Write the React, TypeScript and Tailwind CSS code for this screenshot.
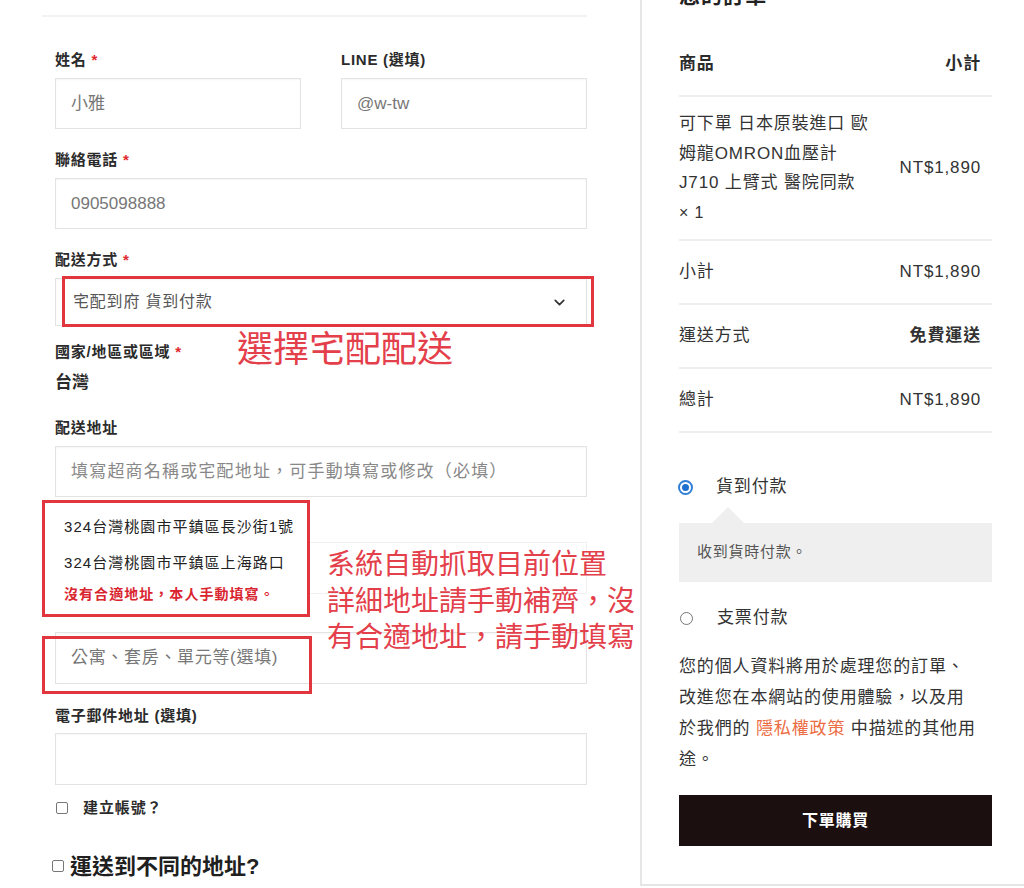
import { ChevronDown } from "lucide-react";
import type { ReactNode } from "react";

function Label({ children, required }: { children: ReactNode; required?: boolean }) {
  return (
    <div className="h-[20px] text-[15px] leading-[20px] font-bold tracking-[0.05em] text-[#2b2b2b]">
      {children}
      {required && <span className="ml-[5px] text-[#e0282e]">*</span>}
    </div>
  );
}

function Box({ children, className = "" }: { children?: ReactNode; className?: string }) {
  return (
    <div
      className={`flex items-center px-[15px] border border-[#e3e3e3] shadow-[inset_0_1px_2px_rgba(0,0,0,0.04)] text-[17px] text-[#777] bg-white ${className}`}
    >
      {children}
    </div>
  );
}

function Row({ left, right, className = "" }: { left: ReactNode; right: ReactNode; className?: string }) {
  return (
    <div className={`flex items-center justify-between pr-[11px] border-b-2 border-[#efefef] ${className}`}>
      <div>{left}</div>
      <div>{right}</div>
    </div>
  );
}

export default function App() {
  return (
    <div className="relative h-[888px] w-[1024px] overflow-hidden bg-white font-['Liberation_Sans','Noto_Sans_CJK_TC',sans-serif] text-[#333]">
      <div className="flex h-full">
        {/* checkout form */}
        <div className="w-[640px] shrink-0 pl-[55px] pr-[53px] pt-[15px]">
          <div className="-ml-[13px] border-t-2 border-[#f2f2f2]" />

          <div className="mt-[33px] grid grid-cols-2 gap-x-[40px]">
            <div>
              <Label required>姓名</Label>
              <Box className="mt-[8px] h-[51px]">小雅</Box>
            </div>
            <div>
              <Label>LINE (選填)</Label>
              <Box className="mt-[8px] h-[51px]">@w-tw</Box>
            </div>
          </div>

          <div className="mt-[21px]">
            <Label required>聯絡電話</Label>
            <Box className="mt-[8px] h-[51px]">0905098888</Box>
          </div>

          <div className="mt-[21px]">
            <Label required>配送方式</Label>
            <Box className="mt-[8px] h-[48px] justify-between !text-[16px] !text-[#555] tracking-[0.05em]">
              <span className="pl-[2px]">宅配到府 貨到付款</span>
              <ChevronDown size={17} strokeWidth={2.4} className="mr-[3px] text-[#333]" />
            </Box>
          </div>

          <div className="mt-[16px]">
            <Label required>國家/地區或區域</Label>
            <div className="mt-[11px] h-[20px] text-[17px] leading-[20px] font-bold text-[#2b2b2b]">台灣</div>
          </div>

          <div className="mt-[25px]">
            <Label>配送地址</Label>
            <Box className="mt-[8px] h-[51px] border-[#dba3ab] tracking-[0.07em] !text-[#888]">
              填寫超商名稱或宅配地址，可手動填寫或修改（必填）
            </Box>
          </div>

          <Box className="mt-[45px] h-[52px] border-[#f0f0f0] shadow-none" />

          <Box className="mt-[38px] h-[52px] tracking-[0.04em]">公寓、套房、單元等(選填)</Box>

          <div className="mt-[22px]">
            <Label>電子郵件地址 (選填)</Label>
            <Box className="mt-[7px] h-[52px]" />
          </div>

          <label className="mt-[13px] flex h-[20px] items-center">
            <span className="ml-[1px] h-[12px] w-[12px] rounded-[2px] border border-[#777]" />
            <span className="ml-[15px] text-[15px] font-bold tracking-[0.06em] text-[#2b2b2b]">建立帳號？</span>
          </label>

          <div className="mt-[33px] flex h-[30px] items-center">
            <span className="-ml-[3px] h-[12px] w-[12px] rounded-[2px] border border-[#777]" />
            <span className="ml-[6px] text-[22px] font-bold text-[#1f1f1f]">運送到不同的地址?</span>
          </div>
        </div>

        {/* order summary */}
        <aside className="h-[886px] flex-1 border-l-2 border-b-2 border-[#e6e6e6] pl-[37px] pr-[32px]">
          <div className="-mt-[18px] h-[28px] text-[21px] font-bold leading-[28px] tracking-[0.05em] text-[#222]">您的訂單</div>

          <div className="text-[17px] tracking-[0.05em]">
            <Row className="mt-[23px] h-[64px] font-bold text-[#2b2b2b]" left="商品" right="小計" />
            <Row
              className="h-[144px]"
              left={
                <div className="leading-[29.5px]">
                  可下單 日本原裝進口 歐<br />
                  姆龍OMRON血壓計<br />
                  J710 上臂式 醫院同款<br />
                  <span className="text-[16px]">× 1</span>
                </div>
              }
              right="NT$1,890"
            />
            <Row className="h-[64px]" left="小計" right="NT$1,890" />
            <Row className="h-[64px]" left="運送方式" right={<span className="font-bold">免費運送</span>} />
            <Row className="h-[64px]" left="總計" right="NT$1,890" />
          </div>

          <div className="mt-[42px] flex h-[24px] items-center">
            <span className="ml-[-1px] flex h-[15px] w-[15px] items-center justify-center rounded-full border-2 border-[#2f7fd8] bg-white">
              <span className="h-[7px] w-[7px] rounded-full bg-[#1f6fcf]" />
            </span>
            <span className="ml-[23px] text-[17px] tracking-[0.05em]">貨到付款</span>
          </div>

          <div className="relative mt-[24px] flex h-[59px] items-center bg-[#efefef] pl-[18px] text-[15px] tracking-[0.05em] text-[#555]">
            <span className="absolute -top-[16px] left-[33px] h-0 w-0 border-x-[16px] border-b-[16px] border-x-transparent border-b-[#efefef]" />
            收到貨時付款。
          </div>

          <div className="mt-[24px] flex h-[24px] items-center">
            <span className="ml-[1px] h-[13px] w-[13px] rounded-full border border-[#777]" />
            <span className="ml-[24px] text-[17px] tracking-[0.05em]">支票付款</span>
          </div>

          <p className="mt-[21px] text-[17px] leading-[31px] tracking-[0.05em] text-[#333]">
            您的個人資料將用於處理您的訂單、<br />
            改進您在本網站的使用體驗，以及用<br />
            於我們的 <span className="text-[#ec6c43]">隱私權政策</span> 中描述的其他用<br />
            途。
          </p>

          <button className="mt-[20px] flex h-[51px] w-full items-center justify-center bg-[#1b0f10] text-[16px] font-bold tracking-[0.05em] text-white">
            下單購買
          </button>
        </aside>
      </div>

      {/* annotations drawn over the form */}
      <div className="absolute left-[62px] top-[276px] h-[51px] w-[532px] border-[3px] border-[#e2363f]" />
      <div className="absolute left-[237px] top-[330px] text-[36px] leading-[40px] text-[#e3404b]">選擇宅配配送</div>

      <div className="absolute left-[42px] top-[500px] h-[117px] w-[268px] border-[3px] border-[#e2363f] bg-white pl-[19px] pt-[13px] text-[15px] tracking-[0.07em]">
        <div className="h-[22px] leading-[22px] text-[#222]">324台灣桃園市平鎮區長沙街1號</div>
        <div className="mt-[14px] h-[22px] leading-[22px] text-[#222]">324台灣桃園市平鎮區上海路口</div>
        <div className="mt-[9px] h-[22px] text-[14px] leading-[22px] font-semibold text-[#d9252f]">沒有合適地址，本人手動填寫。</div>
      </div>

      <div className="absolute left-[42px] top-[636px] h-[58px] w-[270px] border-[3px] border-[#e2363f]" />

      <div className="absolute left-[327px] top-[547px] text-[28px] leading-[36.5px] text-[#e3404b]">
        系統自動抓取目前位置<br />
        詳細地址請手動補齊，沒<br />
        有合適地址，請手動填寫
      </div>
    </div>
  );
}
